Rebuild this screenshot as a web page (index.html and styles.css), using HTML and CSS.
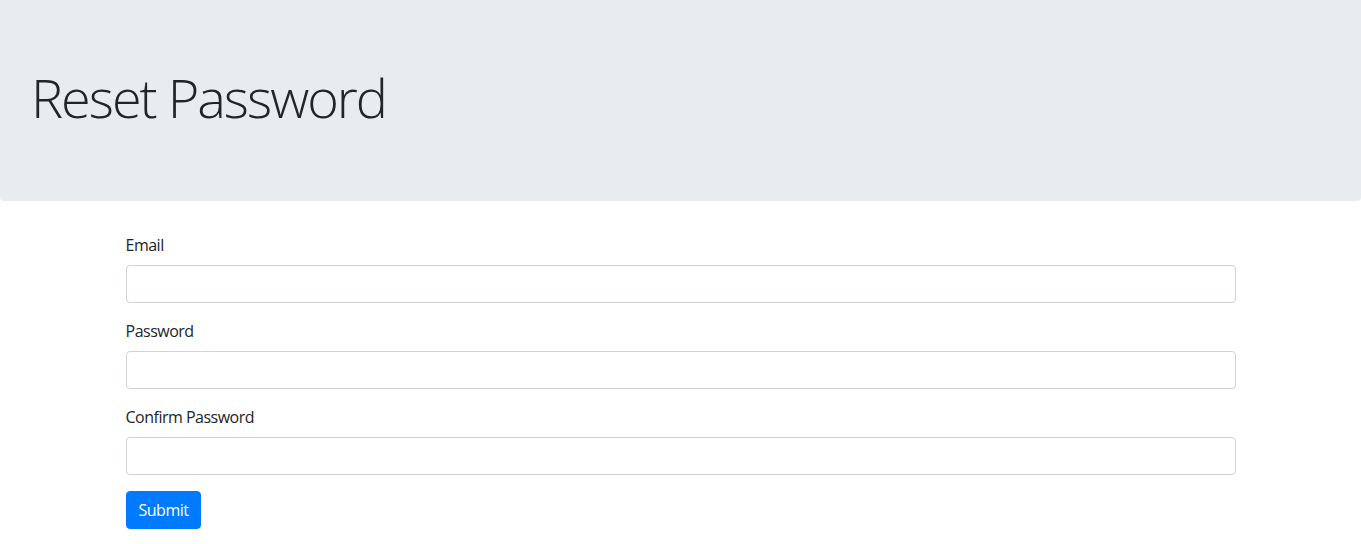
FILE: index.html
```html
<!DOCTYPE html>
<html lang="en">
<head>
<meta charset="utf-8">
<title>Reset Password</title>
<link rel="stylesheet" href="styles.css">
</head>
<body>
<div class="jumbotron">
  <h1 class="display">Reset Password</h1>
</div>
<div class="container">
  <form class="form">
    <div class="form-group">
      <label for="email">Email</label>
      <input id="email" type="email" class="form-control">
    </div>
    <div class="form-group">
      <label for="password">Password</label>
      <input id="password" type="password" class="form-control">
    </div>
    <div class="form-group">
      <label for="confirm">Confirm Password</label>
      <input id="confirm" type="password" class="form-control">
    </div>
    <button type="submit" class="btn">Submit</button>
  </form>
</div>
</body>
</html>
```

FILE: styles.css
```css
* { box-sizing: border-box; }
body {
  margin: 0;
  font-family: "Open Sans", "Noto Sans", sans-serif;
  font-size: 16px;
  line-height: 1.5;
  letter-spacing: -0.5px;
  color: #212529;
  background: #fff;
}
.jumbotron {
  background: #e9ecef;
  padding: 65px 31px;
  height: 201px;
  margin-bottom: 32px;
  border-radius: 0 0 4px 4px;
}
.display {
  margin: 0;
  font-size: 54px;
  font-weight: 300;
  line-height: 1.2;
  letter-spacing: -2px;
}
.container {
  max-width: 1140px;
  margin: 0 auto;
  padding: 0 15px;
}
.form-group {
  display: flex;
  flex-direction: column;
  margin-bottom: 16px;
}
label {
  margin-bottom: 8px;
}
.form-control {
  height: 38px;
  padding: 6px 12px;
  font: inherit;
  border: 1px solid #ced4da;
  border-radius: 4px;
  background: #fff;
}
.btn {
  font: inherit;
  letter-spacing: -0.5px;
  color: #fff;
  background: #007bff;
  border: 1px solid #007bff;
  border-radius: 4px;
  padding: 6px 12px;
  height: 38px;
  line-height: 1.5;
}
```
